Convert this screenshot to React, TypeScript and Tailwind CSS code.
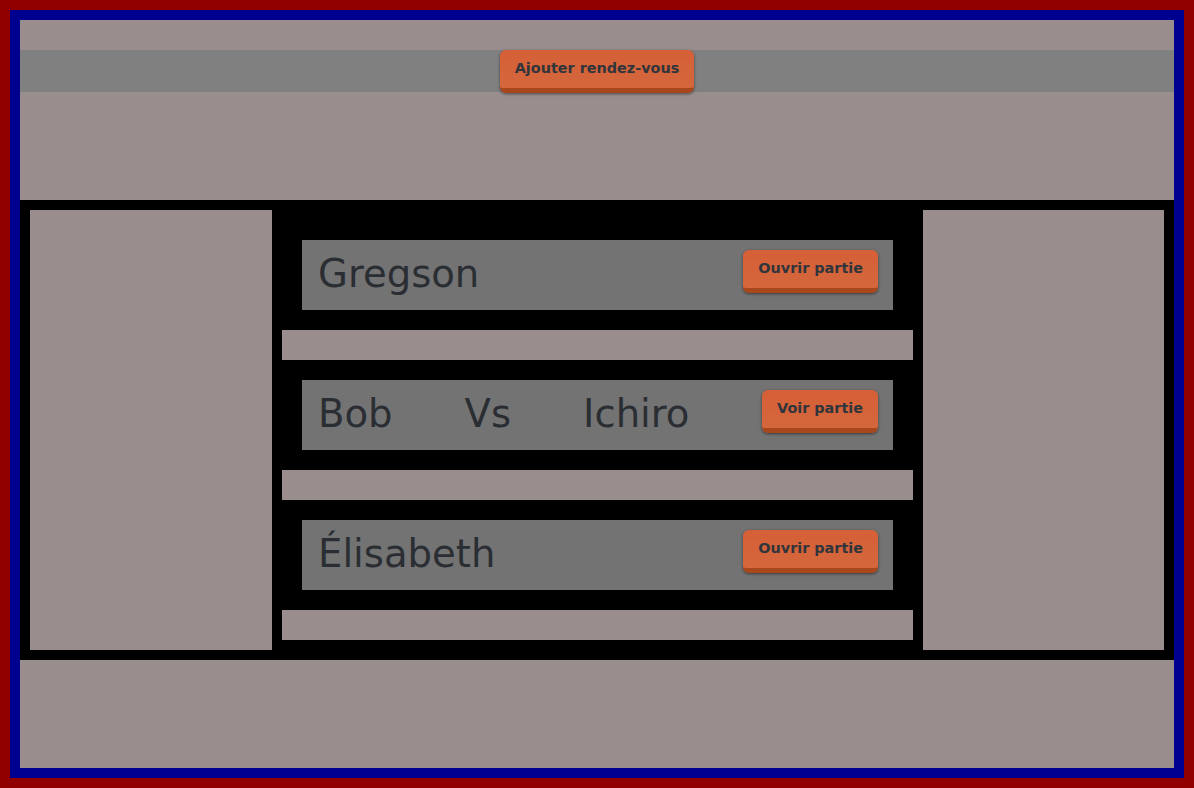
import React from "react";

const font = { fontFamily: '"DejaVu Sans", sans-serif' };

function Btn({ children, className = "" }: { children: React.ReactNode; className?: string }) {
  return (
    <button
      className={
        "h-[43px] px-[15px] pb-[1px] rounded-[6px] bg-gradient-to-b from-[#d65f36] to-[#d4673d] border-b-[5px] border-[#a8461c] text-[14.4px] font-bold text-[#30353b] shadow-[0_1px_3px_rgba(0,0,0,0.5)] leading-none " +
        className
      }
      style={font}
    >
      {children}
    </button>
  );
}

function Row({ children, label }: { children: React.ReactNode; label: string }) {
  return (
    <>
      <div className="mx-[20px] my-[20px] h-[70px] bg-[#737373] flex items-start justify-between pl-[16px] pr-[15px]">
        <div className="h-[68px] text-[38.6px] text-[#2a2e33] flex items-center" style={font}>
          {children}
        </div>
        <Btn className="mt-[10px]">{label}</Btn>
      </div>
      <div className="h-[30px] bg-[#998d8e]" />
    </>
  );
}

export default function App() {
  return (
    <div className="w-[1194px] h-[788px] border-[10px] border-[#900000]" style={font}>
      <div className="w-full h-full border-[10px] border-[#000090] bg-[#998d8e] flex flex-col">
        <div className="h-[180px] pt-[30px]">
          <div className="h-[42px] bg-[#808080] flex justify-center">
            <Btn>Ajouter rendez-vous</Btn>
          </div>
        </div>
        <div className="h-[460px] bg-black p-[10px] flex gap-[10px]">
          <div className="w-[242px] bg-[#998d8e]" />
          <div className="flex-1 pt-[10px]">
            <Row label="Ouvrir partie">Gregson</Row>
            <Row label="Voir partie">
              <span className="flex gap-[72px]">
                <span>Bob</span>
                <span>Vs</span>
                <span>Ichiro</span>
              </span>
            </Row>
            <Row label="Ouvrir partie">Élisabeth</Row>
          </div>
          <div className="w-[241px] bg-[#998d8e]" />
        </div>
        <div className="flex-1" />
      </div>
    </div>
  );
}
